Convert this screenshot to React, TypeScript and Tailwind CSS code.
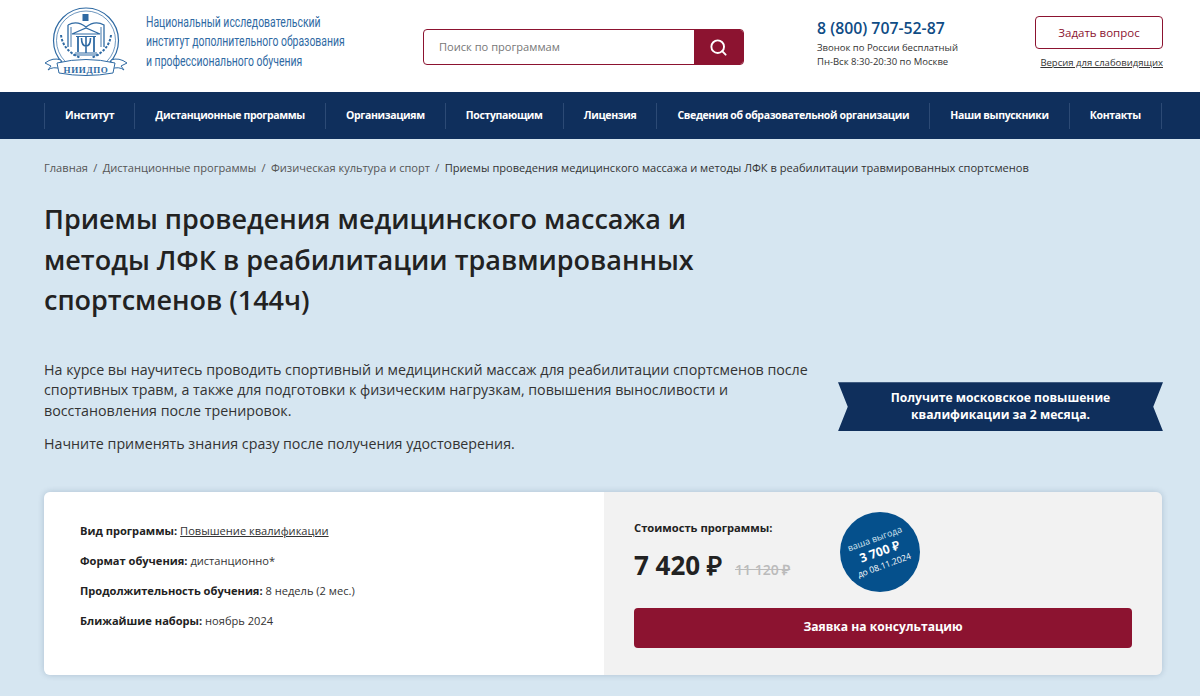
import { Search } from "lucide-react";

const navItems = [
  "Институт",
  "Дистанционные программы",
  "Организациям",
  "Поступающим",
  "Лицензия",
  "Сведения об образовательной организации",
  "Наши выпускники",
  "Контакты",
];

const crumbs = ["Главная", "Дистанционные программы", "Физическая культура и спорт"];

function Logo() {
  return (
    <svg viewBox="0 0 86 70" className="-mt-[8px] h-[70px] w-[86px] shrink-0" fill="none" stroke="#2f6aa3">
      {/* rings */}
      <circle cx="43" cy="33.5" r="32.5" strokeWidth="1.2" />
      <circle cx="43" cy="33.5" r="29.5" strokeWidth="0.7" />
      {/* book */}
      <path d="M25 18 Q34 13 43 20 Q52 13 61 18 V40 M25 18 V40" strokeWidth="1.3" />
      <path d="M28 20 V40 M58 20 V40" strokeWidth="0.9" />
      {/* crest */}
      <rect x="39.5" y="7" width="6" height="7" fill="#2f6aa3" stroke="none" />
      {/* pediment and columns */}
      <path d="M29 27 L43 21 L57 27 Z" fill="#fff" strokeWidth="1.2" />
      <path d="M33 29.5 H53 M32 46 H54 M30 48 H56" strokeWidth="1.2" />
      <path d="M35 30 V45 M51 30 V45" strokeWidth="1.8" />
      {/* psi */}
      <path d="M43 29 V46 M38.5 31 Q38.5 39 43 39 Q47.5 39 47.5 31" strokeWidth="1.6" />
      {/* laurels */}
      <path d="M18 28 Q20 44 38 51 M68 28 Q66 44 48 51" strokeWidth="2" strokeDasharray="2.5 1.5" />
      {/* ribbon */}
      <path d="M2 56 Q10 50 18 53 L18 62 Q10 59 5 63 L8 59 Z" fill="#fff" strokeWidth="1" />
      <path d="M84 56 Q76 50 68 53 L68 62 Q76 59 81 63 L78 59 Z" fill="#fff" strokeWidth="1" />
      <path d="M14 56 Q43 49 72 56 L70 66 Q43 71 16 66 Z" fill="#fff" strokeWidth="1" />
      <text
        x="43"
        y="66"
        textAnchor="middle"
        fill="#2f6aa3"
        stroke="none"
        fontSize="9"
        fontWeight="700"
        letterSpacing="0.6"
        fontFamily="'Liberation Serif', serif"
      >
        НИИДПО
      </text>
    </svg>
  );
}

export default function App() {
  return (
    <div className="min-h-[696px] overflow-hidden bg-[#d6e6f1] font-['Open_Sans',sans-serif] text-[#222222]">
      {/* header */}
      <header className="flex h-[92px] items-center bg-white pl-[43px] pr-[37px]">
        <Logo />
        <div className="-mt-[8px] ml-[17px] w-[260px] font-['Roboto',sans-serif] text-[14px] leading-[19.5px] text-[#2f6aa3]">
          <div className="origin-left scale-x-[0.745] whitespace-nowrap">Национальный исследовательский</div>
          <div className="origin-left scale-x-[0.745] whitespace-nowrap">институт дополнительного образования</div>
          <div className="origin-left scale-x-[0.745] whitespace-nowrap">и профессионального обучения</div>
        </div>
        <div className="ml-[17px] mt-[2px] flex h-[36px] w-[321px] overflow-hidden rounded-[4px] border border-[#8c1330]">
          <div className="flex flex-1 items-center pl-[15px] text-[11.1px] text-[#777777]">Поиск по программам</div>
          <div className="flex w-[49px] items-center justify-center bg-[#8c1330]">
            <Search size={19} strokeWidth={2.4} className="text-white" />
          </div>
        </div>
        <div className="ml-[73px] w-[218px]">
          <div className="-mt-[6px] text-[15.8px] font-semibold leading-[22px] text-[#0f4c85]">8 (800) 707-52-87</div>
          <div className="mt-[2px] text-[9.5px] leading-[14px] text-[#333333]">Звонок по России бесплатный</div>
          <div className="text-[9.5px] leading-[14px] text-[#333333]">Пн-Вск 8:30-20:30 по Москве</div>
        </div>
        <div className="-mt-[6px] flex w-[128px] flex-col items-center">
          <div className="flex h-[33px] w-full items-center justify-center rounded-[4px] border border-[#8c1330] text-[11.5px] font-medium text-[#8c1330]">
            Задать вопрос
          </div>
          <a className="mt-[7px] self-end whitespace-nowrap text-[9.5px] leading-[14px] text-[#333333] underline">
            Версия для слабовидящих
          </a>
        </div>
      </header>

      {/* nav */}
      <nav className="flex h-[47px] items-center bg-[#0f2f5c] pl-[44px]">
        {navItems.map((item) => (
          <div
            key={item}
            className="flex h-[26px] items-center whitespace-nowrap border-l border-[#2c4a75] px-[20.1px] text-[10.5px] font-bold tracking-[-0.36px] text-white last:border-r"
          >
            {item}
          </div>
        ))}
      </nav>

      <main className="pl-[44px] pr-[38px]">
        {/* breadcrumbs */}
        <div className="flex h-[57px] items-center gap-[5.3px] whitespace-nowrap pt-[1px] text-[11.1px] text-[#555555]">
          {crumbs.map((c) => (
            <span key={c} className="flex gap-[5.3px]">
              <span>{c}</span>
              <span>/</span>
            </span>
          ))}
          <span className="text-[#333333]">
            Приемы проведения медицинского массажа и методы ЛФК в реабилитации травмированных спортсменов
          </span>
        </div>

        <h1 className="mt-[3px] w-[700px] text-[27px] font-semibold leading-[40.5px] text-[#222222]">
          Приемы проведения медицинского массажа и методы ЛФК в реабилитации травмированных спортсменов (144ч)
        </h1>

        {/* intro and ribbon */}
        <div className="mt-[39px] flex items-center justify-between">
          <div className="w-[775px] text-[14.25px] leading-[20.5px] text-[#333333]">
            <p>
              На курсе вы научитесь проводить спортивный и медицинский массаж для реабилитации спортсменов после
              спортивных травм, а также для подготовки к физическим нагрузкам, повышения выносливости и
              восстановления после тренировок.
            </p>
            <p className="mt-[12.5px]">Начните применять знания сразу после получения удостоверения.</p>
          </div>
          <div className="-mr-[1px] flex h-[49px] w-[325px] items-center justify-center bg-[#0f2f5c] pb-[2px] text-center text-[12.15px] font-bold leading-[17px] text-white [clip-path:polygon(0_0,100%_0,97%_50%,100%_100%,0_100%,3%_50%)]">
            Получите московское повышение
            <br />
            квалификации за 2 месяца.
          </div>
        </div>

        {/* program card */}
        <div className="mt-[37.5px] flex h-[183px] overflow-hidden rounded-[6px] shadow-[0_0_6px_rgba(15,47,92,0.2)]">
          <div className="flex w-[560px] flex-col gap-[12px] bg-white pl-[36px] pt-[30px] text-[11.1px] leading-[18px] text-[#333333]">
            <div>
              <b className="text-[#222222]">Вид программы:</b> <a className="underline">Повышение квалификации</a>
            </div>
            <div>
              <b className="text-[#222222]">Формат обучения:</b> дистанционно*
            </div>
            <div>
              <b className="text-[#222222]">Продолжительность обучения:</b> 8 недель (2 мес.)
            </div>
            <div>
              <b className="text-[#222222]">Ближайшие наборы:</b> ноябрь 2024
            </div>
          </div>
          <div className="flex-1 bg-[#f2f2f2] pl-[30px] pr-[30px] pt-[19px]">
            <div className="flex h-[97px]">
              <div className="w-[206px]">
                <div className="mt-[8px] text-[11.2px] font-bold leading-[18px]">Стоимость программы:</div>
                <div className="mt-[10px] flex items-baseline whitespace-nowrap">
                  <span className="text-[26px] font-bold leading-[36px] text-[#222222]">7 420 ₽</span>
                  <span className="ml-[13px] text-[14px] font-semibold text-[#bbbbbb] line-through">11 120 ₽</span>
                </div>
              </div>
              <div className="mt-[1px] flex h-[80px] w-[80px] flex-col items-center justify-center rounded-full bg-[#05508c] text-center text-white">
                <div className="-rotate-[20deg]">
                  <div className="text-[9px] leading-[14px] text-[#d6e6f1]">ваша выгода</div>
                  <div className="text-[12.2px] font-bold leading-[14px]">3 700 ₽</div>
                  <div className="whitespace-nowrap text-[8.6px] leading-[14px]">до 08.11.2024</div>
                </div>
              </div>
            </div>
            <div className="flex h-[40px] items-center justify-center rounded-[4px] bg-[#8c1330] text-[12.1px] font-bold text-white">
              Заявка на консультацию
            </div>
          </div>
        </div>
      </main>
    </div>
  );
}
